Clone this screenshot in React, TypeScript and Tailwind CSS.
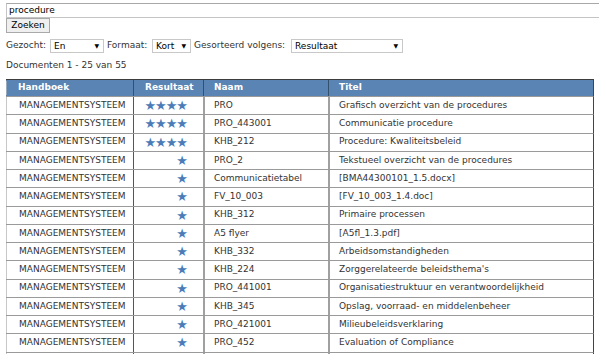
import React from "react";

const rows: [number, string, string][] = [
  [4, "PRO", "Grafisch overzicht van de procedures"],
  [4, "PRO_443001", "Communicatie procedure"],
  [4, "KHB_212", "Procedure: Kwaliteitsbeleid"],
  [1, "PRO_2", "Tekstueel overzicht van de procedures"],
  [1, "Communicatietabel", "[BMA44300101_1.5.docx]"],
  [1, "FV_10_003", "[FV_10_003_1.4.doc]"],
  [1, "KHB_312", "Primaire processen"],
  [1, "A5 flyer", "[A5fl_1.3.pdf]"],
  [1, "KHB_332", "Arbeidsomstandigheden"],
  [1, "KHB_224", "Zorggerelateerde beleidsthema's"],
  [1, "PRO_441001", "Organisatiestruktuur en verantwoordelijkheid"],
  [1, "KHB_345", "Opslag, voorraad- en middelenbeheer"],
  [1, "PRO_421001", "Milieubeleidsverklaring"],
  [1, "PRO_452", "Evaluation of Compliance"],
];

function Select({ label, w }: { label: string; w: string }) {
  return (
    <div
      className={`${w} h-[14px] border border-[#c8c8c8] bg-white flex items-center justify-between pl-[3px] pr-[4px] text-black`}
    >
      <span className="leading-none">{label}</span>
      <span className="text-[6px] leading-none">▼</span>
    </div>
  );
}

export default function App() {
  return (
    <div className="w-[599px] h-[354px] overflow-hidden bg-white font-['Verdana','DejaVu_Sans',sans-serif] text-[9px] text-[#333] pl-[6px] pt-[3px]">
      <div className="w-[620px] h-[15px] border border-[#c4c4c4] border-t-[#a8a8a8] flex items-center pl-[2px] text-black">
        procedure
      </div>
      <div className="w-[44px] h-[15px] border border-[#a9a9a9] bg-[#efefef] flex items-center justify-center text-black">
        Zoeken
      </div>
      <div className="mt-[6px] h-[14px] flex items-center">
        <span className="w-[44px]">Gezocht:</span>
        <Select label="En" w="w-[54px]" />
        <span className="ml-[3px] w-[45px]">Formaat:</span>
        <Select label="Kort" w="w-[39px]" />
        <span className="ml-[3px] w-[97px]">Gesorteerd volgens:</span>
        <Select label="Resultaat" w="w-[112px]" />
      </div>
      <div className="mt-[7px] h-[11px] leading-[11px]">Documenten 1 - 25 van 55</div>
      <div className="mt-[8px] w-[588px]">
        <div className="flex h-[17px] bg-[#5a84b3] border-t border-[#3d3d3d] border-r border-r-[#444] text-white font-bold items-center">
          <div className="w-[127px] pl-[11px] border-l border-[#9ab]">Handboek</div>
          <div className="w-[70px] pl-[11px] border-l border-[#34506f] h-full flex items-center">Resultaat</div>
          <div className="w-[125px] pl-[10px] border-l border-[#34506f] h-full flex items-center">Naam</div>
          <div className="flex-1 pl-[10px] border-l border-[#34506f] h-full flex items-center">Titel</div>
        </div>
        {rows.map(([stars, naam, titel], i) => (
          <div
            key={i}
            className="flex h-[18.26px] border-t border-[#9a9a9a] border-r border-r-[#444] items-stretch"
          >
            <div className="w-[127px] pl-[12px] border-l border-[#c8c8c8] flex items-center">
              MANAGEMENTSYSTEEM
            </div>
            <div className="w-[70px] border-l border-[#555] flex items-center pl-[10px]">
              <div className="w-[43px] flex justify-end text-[#4b7cb8] text-[13px] leading-none tracking-[-1px]">
                {"★".repeat(stars)}
              </div>
            </div>
            <div className="w-[125px] pl-[9px] border-l-2 border-[#a0a0a0] flex items-center">{naam}</div>
            <div className="flex-1 pl-[9px] border-l-2 border-[#a0a0a0] flex items-center">{titel}</div>
          </div>
        ))}
        <div className="flex h-[18.26px] border-t border-[#9a9a9a] border-r border-r-[#444] items-stretch">
          <div className="w-[127px] border-l border-[#c8c8c8]" />
          <div className="w-[70px] border-l border-[#555]" />
          <div className="w-[125px] border-l-2 border-[#a0a0a0]" />
          <div className="flex-1 border-l-2 border-[#a0a0a0]" />
        </div>
      </div>
    </div>
  );
}
